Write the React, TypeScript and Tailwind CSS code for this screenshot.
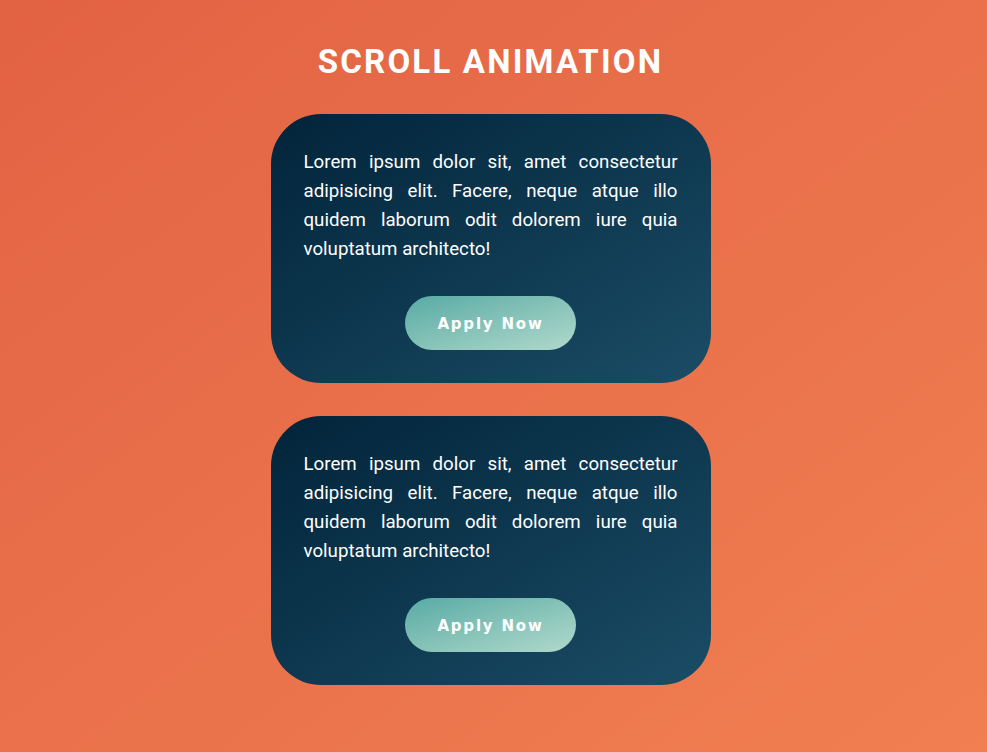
import React from 'react';

const cards = [0, 1];

const Card = () => (
  <div className="w-[440px] rounded-[50px] bg-gradient-to-br from-[#03243a] to-[#1b4d66] px-[33px] pt-[34px] pb-[33px] flex flex-col items-center">
    <p className="text-white text-[18.7px] leading-[29px] text-justify font-['Roboto',sans-serif]">
      Lorem ipsum dolor sit, amet consectetur adipisicing elit. Facere, neque atque illo quidem laborum odit dolorem iure quia voluptatum architecto!
    </p>
    <button className="mt-[32px] w-[171px] h-[54px] pt-[2px] rounded-full bg-gradient-to-br from-[#56aba5] to-[#b0d9cb] text-white text-[15px] font-bold tracking-[1.8px] font-['DejaVu_Sans',sans-serif]">
      Apply Now
    </button>
  </div>
);

export default function App() {
  return (
    <div className="min-h-screen w-full bg-gradient-to-br from-[#e26244] to-[#f17f51] flex flex-col items-center pt-[40px] pb-[67px] pr-[6px]">
      <h1 className="text-white text-[33px] font-bold tracking-[2.2px] uppercase leading-[44px] font-['Roboto',sans-serif]">
        Scroll Animation
      </h1>
      <div className="mt-[30px] flex flex-col gap-[33px]">
        {cards.map((c) => (
          <Card key={c} />
        ))}
      </div>
    </div>
  );
}
